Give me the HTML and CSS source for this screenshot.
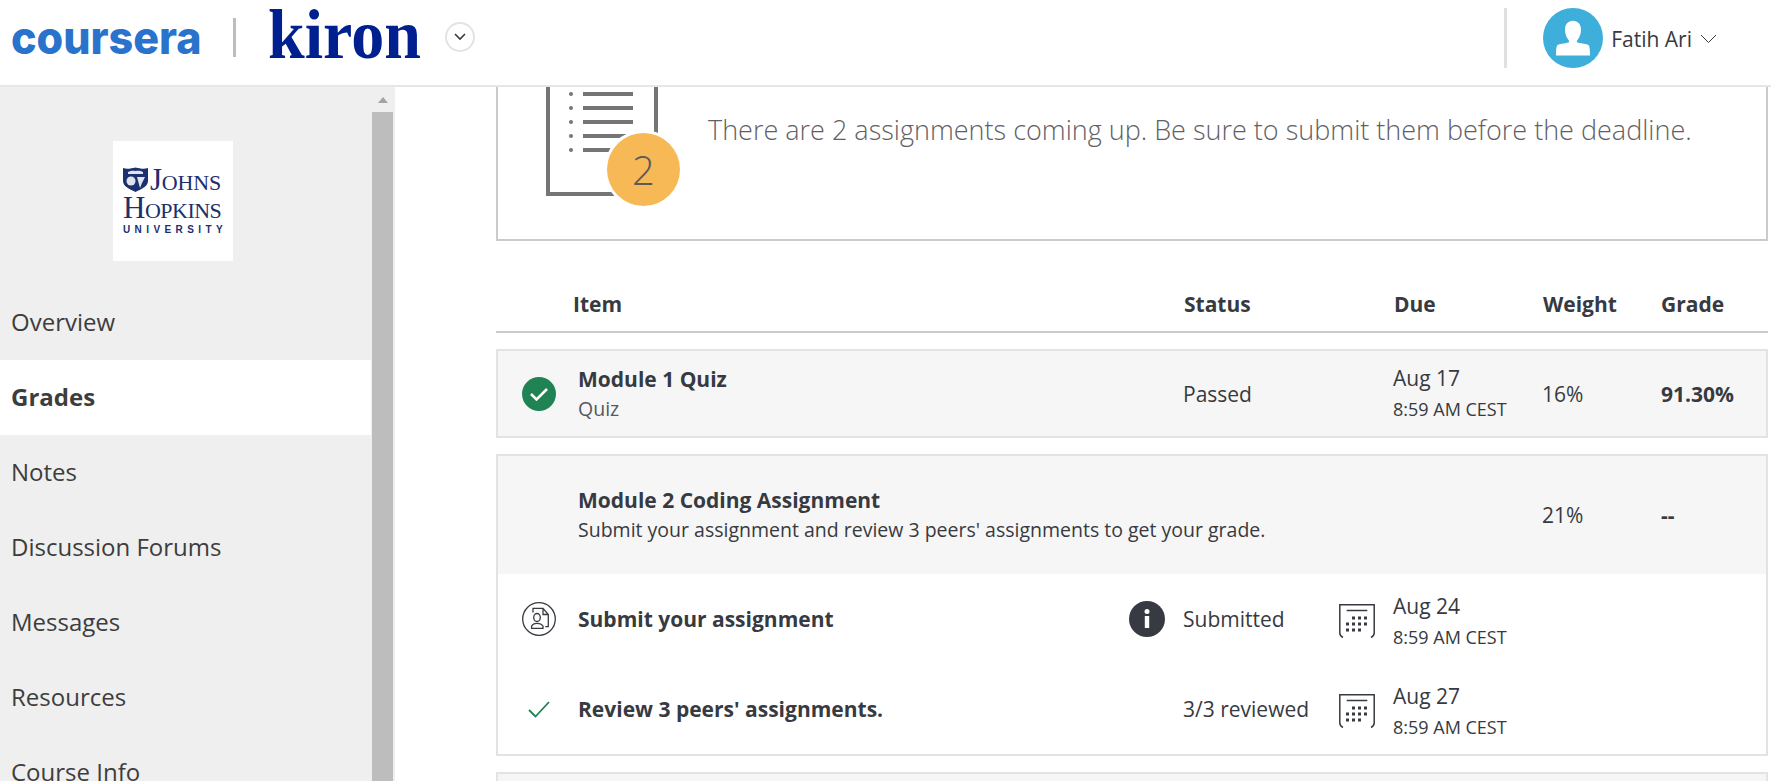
FILE: index.html
```html
<!DOCTYPE html>
<html lang="en">

<head>
    <meta charset="UTF-8">
    <title>Grades</title>
    <link rel="stylesheet" href="styles.css">
</head>

<body>

    <header class="topbar">
        <span class="logo-coursera">coursera</span>
        <span class="logo-sep"></span>
        <span class="logo-kiron">kiron</span>
        <span class="org-toggle">
            <svg width="12" height="8" viewBox="0 0 12 8"><path d="M1 1l5 5 5-5" fill="none" stroke="#373a41" stroke-width="1.600"/></svg>
        </span>
        <span class="user-sep"></span>
        <span class="avatar">
            <svg width="60" height="60" viewBox="0 0 60 60"><path d="M30 12.700c5 0 8 3.500 8 9 0 4-1.500 8-4 11v1.500c3 1 8 1.500 11 2.500 1.500.5 2 4 2 10.800H13c0-6.800.5-10.300 2-10.800 3-1 8-1.500 11-2.500v-1.500c-2.500-3-4-7-4-11 0-5.500 3-9 8-9z" fill="#fff"/></svg>
        </span>
        <span class="user-name">Fatih Ari</span>
        <svg class="user-caret" width="17" height="10" viewBox="0 0 17 10"><path d="M1 1l7.500 7.500L16 1" fill="none" stroke="#373a41" stroke-width="1"/></svg>
    </header>

    <div class="page">
        <aside class="sidebar">
            <div class="side-col">
                <div class="uni-logo">
                    <div class="uni-top">
                        <svg width="25" height="25" viewBox="0 0 25 25">
                            <path d="M0 1c4 1.500 8 .5 12.500-.5 4.500 1 8.500 2 12.500.5v13c0 5-6 8-12.500 11C6 22 0 19 0 14z" fill="#1c2f6e"/>
                            <path d="M5 5c3-1.500 5-1.500 7.500-1 2.500-.5 5-.5 7.500 1v2H5z" fill="#dfe3ee"/>
                            <circle cx="8" cy="14" r="4.500" fill="#dfe3ee"/>
                            <path d="M14 10h8l-3 6-2 5z" fill="#dfe3ee"/>
                        </svg>
                        <span class="uni-johns">Johns</span>
                    </div>
                    <div class="uni-hopkins">Hopkins</div>
                    <div class="uni-sub">UNIVERSITY</div>
                </div>
                <nav class="side-nav">
                    <a class="side-link">Overview</a>
                    <a class="side-link active">Grades</a>
                    <a class="side-link">Notes</a>
                    <a class="side-link">Discussion Forums</a>
                    <a class="side-link">Messages</a>
                    <a class="side-link">Resources</a>
                    <a class="side-link">Course Info</a>
                </nav>
            </div>
            <div class="scrollbar">
                <span class="scroll-arrow"></span>
                <span class="scroll-thumb"></span>
            </div>
        </aside>

        <main class="content">
            <section class="notice">
                <div class="notice-icon">
                    <svg width="112" height="109" viewBox="0 0 112 109">
                        <path d="M2 0v107h108V0" fill="none" stroke="#757575" stroke-width="4"/>
                        <g fill="#757575">
                            <circle cx="25" cy="7" r="2"/><rect x="37" y="5" width="50" height="4"/>
                            <circle cx="25" cy="21" r="2"/><rect x="37" y="19" width="50" height="4"/>
                            <circle cx="25" cy="35" r="2"/><rect x="37" y="33" width="50" height="4"/>
                            <circle cx="25" cy="49" r="2"/><rect x="37" y="47" width="50" height="4"/>
                            <circle cx="25" cy="63" r="2"/><rect x="37" y="61" width="50" height="4"/>
                        </g>
                    </svg>
                    <span class="notice-badge">2</span>
                </div>
                <p class="notice-text">There are 2 assignments coming up. Be sure to submit them before the deadline.</p>
            </section>

            <div class="table-head">
                <span>Item</span>
                <span>Status</span>
                <span>Due</span>
                <span>Weight</span>
                <span>Grade</span>
            </div>

            <section class="card card-grey">
                <div class="row row-quiz">
                    <span class="cell-icon">
                        <svg width="34" height="34" viewBox="0 0 34 34"><circle cx="17" cy="17" r="17" fill="#1f8354"/><path d="M9 17l5.500 5.500 10.500-10.500" fill="none" stroke="#fff" stroke-width="2.600"/></svg>
                    </span>
                    <div class="cell-name">
                        <div class="item-title">Module 1 Quiz</div>
                        <div class="item-sub">Quiz</div>
                    </div>
                    <span class="cell-status">Passed</span>
                    <div class="cell-due">
                        <div class="due-date">Aug 17</div>
                        <div class="due-time">8:59 AM CEST</div>
                    </div>
                    <span class="cell-weight">16%</span>
                    <span class="cell-grade">91.30%</span>
                </div>
            </section>

            <section class="card">
                <div class="row row-group">
                    <div class="cell-name cell-wide">
                        <div class="item-title">Module 2 Coding Assignment</div>
                        <div class="item-desc">Submit your assignment and review 3 peers' assignments to get your grade.</div>
                    </div>
                    <span class="cell-weight">21%</span>
                    <span class="cell-grade">--</span>
                </div>
                <div class="row row-sub">
                    <span class="cell-icon">
                        <svg width="34" height="34" viewBox="0 0 34 34" fill="none" stroke="#373a41" stroke-width="1.300">
                            <circle cx="17" cy="17" r="16.300"/>
                            <path d="M11 10.500V6.300h10l5.300 6.200v12.100h-3M21 6.300v6.200h5.300"/>
                            <ellipse cx="15" cy="15.500" rx="3.300" ry="4"/>
                            <path d="M9.600 26.300v-2.300c1-1.800 3-2.700 5.400-2.700s4.800.9 6 2.700v2.300z"/>
                        </svg>
                    </span>
                    <div class="cell-name"><div class="item-title">Submit your assignment</div></div>
                    <span class="cell-flag">
                        <svg width="36" height="36" viewBox="0 0 36 36"><circle cx="18" cy="18" r="18" fill="#373a41"/><rect x="15.800" y="15" width="4.400" height="12" fill="#fff"/><circle cx="18" cy="10.500" r="2.500" fill="#fff"/></svg>
                    </span>
                    <span class="cell-status">Submitted</span>
                    <span class="cell-cal">
                        <svg width="36" height="34" viewBox="0 0 36 34">
                            <path d="M4 33.500c-2-1-3.200-2.500-3.200-4.500V.8h34.400V29c0 2-1.200 3.500-3.200 4.500" fill="none" stroke="#373a41" stroke-width="1.500"/>
                            <path d="M7.700 6.500h20.600" stroke="#373a41" stroke-width="1.500"/>
                            <g fill="#373a41">
                                <rect x="13" y="12.500" width="3" height="3"/><rect x="19" y="12.500" width="3" height="3"/><rect x="25" y="12.500" width="3" height="3"/>
                                <rect x="7" y="18.500" width="3" height="3"/><rect x="13" y="18.500" width="3" height="3"/><rect x="19" y="18.500" width="3" height="3"/><rect x="25" y="18.500" width="3" height="3"/>
                                <rect x="7" y="24.500" width="3" height="3"/><rect x="13" y="24.500" width="3" height="3"/><rect x="19" y="24.500" width="3" height="3"/>
                            </g>
                        </svg>
                    </span>
                    <div class="cell-due">
                        <div class="due-date">Aug 24</div>
                        <div class="due-time">8:59 AM CEST</div>
                    </div>
                </div>
                <div class="row row-sub">
                    <span class="cell-icon">
                        <svg width="22" height="17" viewBox="0 0 22 17"><path d="M1 9l6.500 6.500L21 1" fill="none" stroke="#1f8354" stroke-width="1.800"/></svg>
                    </span>
                    <div class="cell-name"><div class="item-title">Review 3 peers' assignments.</div></div>
                    <span class="cell-flag"></span>
                    <span class="cell-status">3/3 reviewed</span>
                    <span class="cell-cal">
                        <svg width="36" height="34" viewBox="0 0 36 34">
                            <path d="M4 33.500c-2-1-3.200-2.500-3.200-4.500V.8h34.400V29c0 2-1.200 3.500-3.200 4.500" fill="none" stroke="#373a41" stroke-width="1.500"/>
                            <path d="M7.700 6.500h20.600" stroke="#373a41" stroke-width="1.500"/>
                            <g fill="#373a41">
                                <rect x="13" y="12.500" width="3" height="3"/><rect x="19" y="12.500" width="3" height="3"/><rect x="25" y="12.500" width="3" height="3"/>
                                <rect x="7" y="18.500" width="3" height="3"/><rect x="13" y="18.500" width="3" height="3"/><rect x="19" y="18.500" width="3" height="3"/><rect x="25" y="18.500" width="3" height="3"/>
                                <rect x="7" y="24.500" width="3" height="3"/><rect x="13" y="24.500" width="3" height="3"/><rect x="19" y="24.500" width="3" height="3"/>
                            </g>
                        </svg>
                    </span>
                    <div class="cell-due">
                        <div class="due-date">Aug 27</div>
                        <div class="due-time">8:59 AM CEST</div>
                    </div>
                </div>
            </section>

            <section class="card card-grey card-next"></section>
        </main>
    </div>

</body>

</html>
```

FILE: styles.css
```css
html,
body {
    margin: 0;
    padding: 0;
    height: 781px;
    overflow: hidden;
    background: #fff;
}

body {
    font-family: "Open Sans", "Liberation Sans", sans-serif;
    color: #373a41;
}

/* top bar */
.topbar {
    display: flex;
    align-items: center;
    height: 85px;
    border-bottom: 2px solid #e6e6e6;
    padding-left: 11px;
}

.logo-coursera {
    width: 192px;
    font-family: "Inter", sans-serif;
    font-weight: 800;
    font-size: 43px;
    line-height: 40px;
    color: #2a73cc;
    transform: scaleY(1.05);
    margin-bottom: 12px;
}

.logo-sep {
    width: 3px;
    height: 39px;
    background: #bdbdbd;
    margin-left: 30px;
    margin-bottom: 10px;
}

.logo-kiron {
    width: 153px;
    margin-left: 32px;
    font-family: "Liberation Serif", serif;
    font-weight: 700;
    font-size: 66px;
    line-height: 60px;
    color: #00208f;
    transform: scaleY(1.05);
    margin-bottom: 15px;
}

.org-toggle {
    display: flex;
    align-items: center;
    justify-content: center;
    width: 26px;
    height: 26px;
    border: 2px solid #e3e3e3;
    border-radius: 50%;
    margin-left: 24px;
    margin-bottom: 11px;
}

.user-sep {
    width: 3px;
    height: 60px;
    background: #e0e0e0;
    margin-left: auto;
    margin-bottom: 9px;
}

.avatar {
    display: block;
    width: 60px;
    height: 60px;
    border-radius: 50%;
    background: #3eaedb;
    margin-left: 36px;
    margin-bottom: 9px;
    overflow: hidden;
}

.user-name {
    font-size: 21px;
    margin-left: 8px;
    margin-bottom: 7px;
}

.user-caret {
    margin-left: 8px;
    margin-right: 54px;
    margin-bottom: 7px;
}

/* page */
.page {
    display: flex;
}

.sidebar {
    display: flex;
    width: 395px;
    height: 694px;
    background: #efefef;
    flex-shrink: 0;
    overflow: hidden;
}

.side-col {
    width: 371px;
    flex-shrink: 0;
    padding-top: 54px;
}

.uni-logo {
    box-sizing: border-box;
    width: 120px;
    height: 120px;
    margin-left: 113px;
    padding: 26px 0 0 10px;
    background: #fff;
    color: #1c2f6e;
    font-family: "Liberation Serif", serif;
}

.uni-top {
    display: flex;
    align-items: center;
    height: 25px;
    gap: 2px;
}

.uni-johns,
.uni-hopkins {
    font-variant: small-caps;
    font-size: 31px;
    letter-spacing: -.200px;
    line-height: 25px;
}

.uni-hopkins {
    height: 29px;
    margin-top: 3px;
    line-height: 26px;
    letter-spacing: -.500px;
}

.uni-sub {
    font-family: "Liberation Sans", sans-serif;
    font-size: 10px;
    font-weight: 700;
    letter-spacing: 4.400px;
    line-height: 12px;
}

.side-nav {
    margin-top: 24px;
}

.side-link {
    display: block;
    height: 75px;
    line-height: 74px;
    padding-left: 11px;
    font-size: 24px;
    color: #3d3d3d;
}

.side-link.active {
    background: #fff;
    font-weight: 700;
}

.scrollbar {
    display: flex;
    flex-direction: column;
    align-items: center;
    width: 21px;
    margin-left: 1px;
}

.scroll-arrow {
    width: 0;
    height: 0;
    border-left: 5px solid transparent;
    border-right: 5px solid transparent;
    border-bottom: 6px solid #a3a3a3;
    margin: 10px 0 9px;
}

.scroll-thumb {
    flex: 1;
    width: 21px;
    background: #bdbdbd;
}

/* main column */
.content {
    width: 1272px;
    margin-left: 101px;
    flex-shrink: 0;
}

.notice {
    display: flex;
    box-sizing: border-box;
    height: 154px;
    border: 2px solid #cbcbcb;
    border-top: 0;
    padding-left: 48px;
}

.notice-icon {
    position: relative;
    width: 112px;
    height: 109px;
}

.notice-icon svg {
    display: block;
}

.notice-badge {
    position: absolute;
    left: 61px;
    top: 46px;
    width: 73px;
    height: 73px;
    border-radius: 50%;
    background: #f6b955;
    box-shadow: 0 0 0 3px #fff;
    font-size: 40px;
    font-weight: 300;
    line-height: 73px;
    text-align: center;
    color: #5a5a5a;
}

.notice-text {
    margin: 23px 0 0 50px;
    font-size: 27px;
    font-weight: 300;
    line-height: 40px;
    color: #5f6166;
}

.table-head,
.row {
    display: grid;
    grid-template-columns: 81px 549px 55px 155px 56px 148px 119px 1fr;
}

.table-head {
    height: 92px;
    padding-top: 36px;
    box-sizing: border-box;
    align-items: center;
    border-bottom: 2px solid #cbcbcb;
    font-size: 21px;
    font-weight: 700;
}

.table-head span:nth-child(1) {
    grid-column: 2;
    margin-left: -4px;
}

.table-head span:nth-child(2) {
    grid-column: 3 / 5;
    margin-left: 58px;
}

.table-head span:nth-child(3) {
    grid-column: 5 / 7;
    margin-left: 58px;
}

.table-head span:nth-child(4) {
    grid-column: 7;
    margin-left: 3px;
}

.table-head span:nth-child(5) {
    grid-column: 8;
    margin-left: 2px;
}

/* cards */
.card {
    border: 2px solid #e3e3e3;
    margin-top: 16px;
}

.card-grey {
    background: #f6f6f6;
}

.card-next {
    height: 40px;
}

.row {
    align-items: center;
    font-size: 21px;
}

.row-quiz {
    height: 85px;
}

.row-group {
    height: 118px;
    background: #f6f6f6;
}

.row-sub {
    height: 90px;
}

.cell-icon {
    display: flex;
    justify-content: center;
}

.cell-name {
    grid-column: 2;
    margin-left: -1px;
}

.row-quiz .cell-status {
    grid-column: 4;
}

.row-quiz .cell-due {
    grid-column: 6;
}

.cell-wide {
    grid-column: 2 / 7;
}

.cell-due {
    margin-left: -1px;
}

.cell-flag {
    display: flex;
}

.cell-flag svg {
    margin-left: 1px;
}

.cell-cal {
    display: flex;
}

.cell-cal svg {
    margin-left: 1px;
    margin-top: 3px;
}

.cell-weight {
    grid-column: 7;
}

.item-title {
    font-size: 21px;
    font-weight: 700;
    line-height: 30px;
}

.item-sub {
    font-size: 19.500px;
    line-height: 30px;
    color: #55585f;
}

.item-desc {
    font-size: 19.500px;
    line-height: 30px;
}

.due-date {
    font-size: 21px;
    line-height: 31px;
}

.due-time {
    font-size: 18px;
    line-height: 31px;
}

.row-sub .cell-due {
    padding-top: 6px;
}

.cell-grade {
    font-weight: 700;
}
```
